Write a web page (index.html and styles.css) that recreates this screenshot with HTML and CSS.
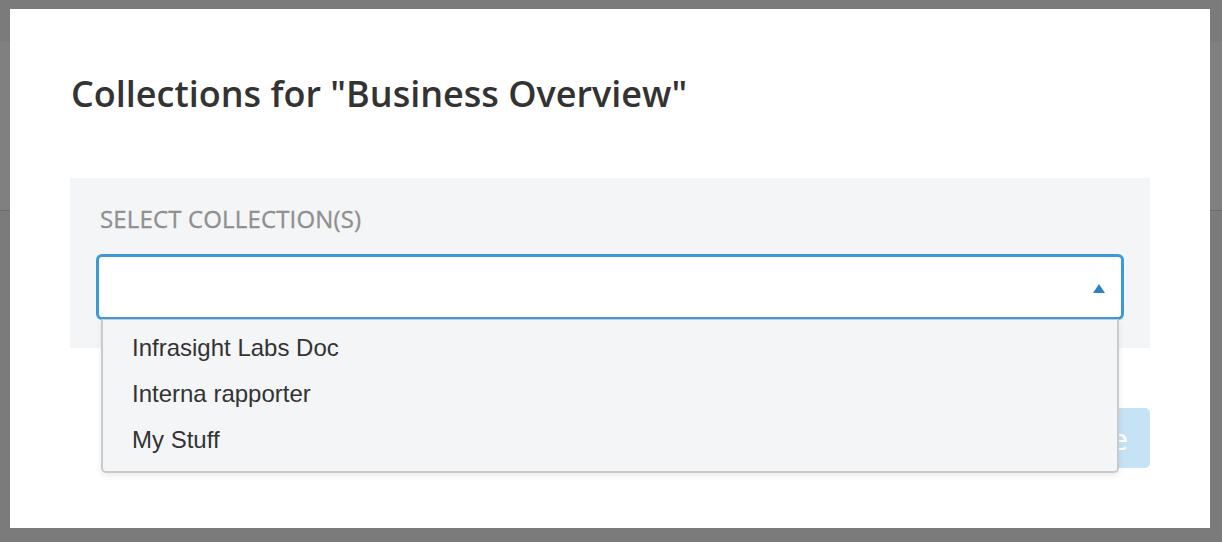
FILE: index.html
```html
<!DOCTYPE html>
<html>
<head>
<meta charset="utf-8">
<link rel="stylesheet" href="styles.css">
</head>
<body>
<div class="page">
  <div class="page-top"></div>
  <div class="page-band"></div>
</div>
<div class="modal">
  <h1 class="modal-title">Collections for "Business Overview"</h1>
  <div class="panel">
    <div class="label">SELECT COLLECTION(S)</div>
    <div class="select-wrap">
      <div class="select">
        <span class="arrow"></span>
      </div>
      <ul class="menu">
        <li class="menu-item">Infrasight Labs Doc</li>
        <li class="menu-item">Interna rapporter</li>
        <li class="menu-item">My Stuff</li>
      </ul>
    </div>
  </div>
  <div class="footer">
    <button class="btn-save">Save</button>
  </div>
</div>
</body>
</html>
```

FILE: styles.css
```css
html, body {
  margin: 0;
  padding: 0;
}
body {
  width: 1222px;
  height: 542px;
  background: #7a7b7a;
  overflow: hidden;
  position: relative;
}
.page-top {
  height: 42px;
}
.page-band {
  height: 168px;
  background: #7f807f;
  border-bottom: 1px solid #6c6d6c;
}
.modal {
  position: absolute;
  left: 10px;
  top: 9px;
  width: 1200px;
  height: 519px;
  box-sizing: border-box;
  background: #fff;
  padding: 60px 60px 60px 60px;
  display: flex;
  flex-direction: column;
}
.modal-title {
  margin: 0;
  font-family: "Open Sans", sans-serif;
  font-weight: 600;
  font-size: 36px;
  line-height: 49px;
  color: #333;
  padding-left: 1px;
}
.panel {
  margin-top: 60px;
  background: #f4f5f7;
  padding: 25px 26px 28px 26px;
  height: 170px;
  box-sizing: border-box;
}
.label {
  font-family: "Open Sans", sans-serif;
  font-weight: 400;
  font-size: 24px;
  line-height: 31px;
  letter-spacing: 0.15px;
  color: #8f8f8f;
  margin-left: 4px;
  -webkit-text-stroke: 0.3px #8f8f8f;
}
.select-wrap {
  position: relative;
  margin-top: 20px;
}
.select {
  height: 66px;
  box-sizing: border-box;
  border: 3px solid #3d9ad9;
  border-radius: 6px;
  background: #fff;
  display: flex;
  align-items: center;
  justify-content: flex-end;
  padding-right: 16px;
}
.arrow {
  width: 0;
  height: 0;
  border-left: 6px solid transparent;
  border-right: 6px solid transparent;
  border-bottom: 9px solid #2f82c2;
  margin-top: 2px;
}
.menu {
  position: absolute;
  left: 5px;
  right: 5px;
  top: 65px;
  margin: 0;
  list-style: none;
  background: #f4f5f7;
  border: 2px solid #cacaca;
  border-top-width: 1px;
  border-radius: 0 0 5px 5px;
  padding: 5px 0 8px 0;
  box-shadow: 0 3px 6px rgba(0,0,0,0.08);
  z-index: 2;
}
.menu-item {
  font-family: "Liberation Sans", Arial, sans-serif;
  font-size: 24px;
  line-height: 46px;
  color: #333;
  padding-left: 29px;
}
.footer {
  margin-top: 60px;
  display: flex;
  justify-content: flex-end;
}
.btn-save {
  height: 60px;
  padding: 0 22px 0 24px;
  border: none;
  border-radius: 5px;
  background: #c6e2f5;
  color: #fff;
  font-family: "Open Sans", sans-serif;
  font-size: 30px;
  font-weight: 400;
}
```
